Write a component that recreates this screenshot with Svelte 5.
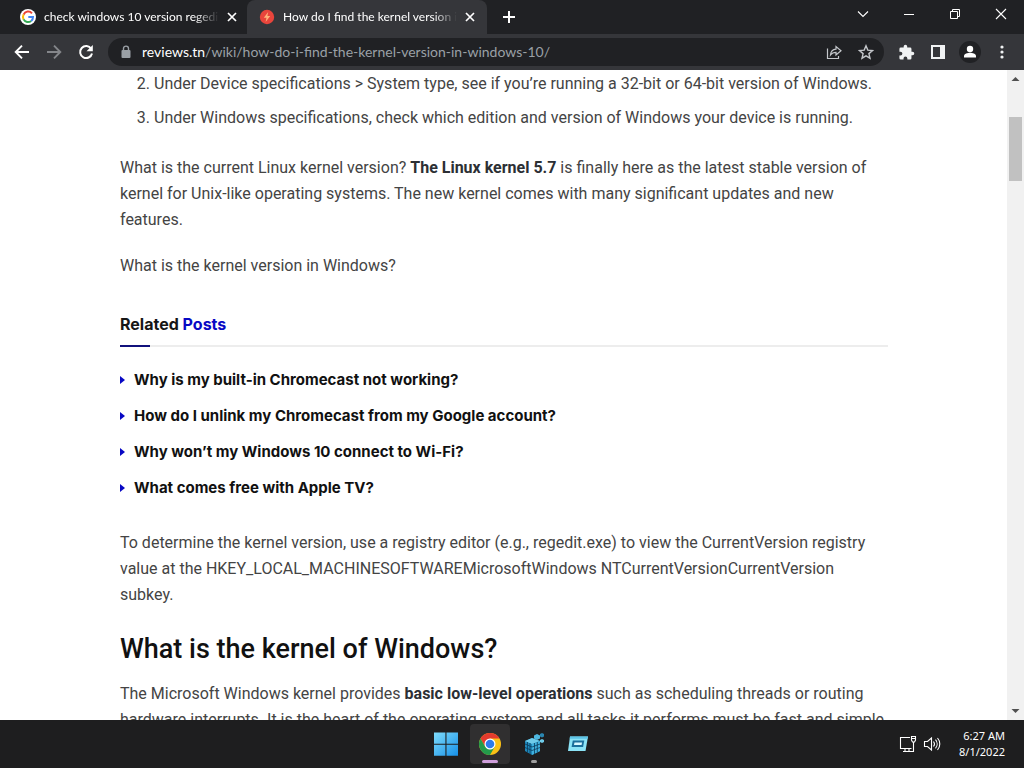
<script lang="ts">
    let address = "/wiki/how-do-i-find-the-kernel-version-in-windows-10/";

    const related = [
        "Why is my built-in Chromecast not working?",
        "How do I unlink my Chromecast from my Google account?",
        "Why won’t my Windows 10 connect to Wi-Fi?",
        "What comes free with Apple TV?",
    ];
</script>

<div class="desktop">
    <header class="tabstrip">
        <div class="tab">
            <svg class="favicon" viewBox="0 0 16 16">
                <circle cx="8" cy="8" r="8" fill="#fff" />
                <path d="M12 4.3A5 5 0 0 0 3.6 5.6" fill="none" stroke="#ea4335" stroke-width="2" />
                <path d="M3.6 5.6A5 5 0 0 0 3.6 10.4" fill="none" stroke="#fbbc05" stroke-width="2" />
                <path d="M3.6 10.4A5 5 0 0 0 11.2 11.9" fill="none" stroke="#34a853" stroke-width="2" />
                <path d="M11.2 11.9A5 5 0 0 0 13 8H8.3" fill="none" stroke="#4285f4" stroke-width="2" />
            </svg>
            <span class="tabTitle">check windows 10 version regedi</span>
            <button class="tabClose" aria-label="Close tab">
                <svg width="10" height="10" viewBox="0 0 10 10"><path d="M1 1l8 8M9 1l-8 8" stroke="#fff" stroke-width="1.7" /></svg>
            </button>
        </div>
        <div class="tab active">
            <svg class="favicon" viewBox="0 0 16 16">
                <circle cx="8" cy="8" r="7.2" fill="#e8453c" />
                <path d="M9.2 3L4.8 8.8h2.7L6.6 13l4.6-6H8.4z" fill="#ffb37a" />
            </svg>
            <span class="tabTitle">How do I find the kernel version i</span>
            <button class="tabClose" aria-label="Close tab">
                <svg width="10" height="10" viewBox="0 0 10 10"><path d="M1 1l8 8M9 1l-8 8" stroke="#fff" stroke-width="1.7" /></svg>
            </button>
        </div>
        <button class="newTab" aria-label="New tab">
            <svg width="12" height="12" viewBox="0 0 12 12"><path d="M6 0v12M0 6h12" stroke="#fff" stroke-width="2" /></svg>
        </button>
        <div class="windowButtons">
            <button aria-label="Search tabs">
                <svg width="12" height="12" viewBox="0 0 12 12"><path d="M1 3.5l5 5 5-5" fill="none" stroke="#fff" stroke-width="1.1" /></svg>
            </button>
            <button aria-label="Minimize">
                <svg width="12" height="12" viewBox="0 0 12 12"><path d="M1 6.5h10" stroke="#fff" /></svg>
            </button>
            <button aria-label="Restore">
                <svg width="12" height="12" viewBox="0 0 12 12"><path d="M1.5 3.5h7v7h-7zM3.5 3.5v-2h7v7h-2" fill="none" stroke="#fff" /></svg>
            </button>
            <button aria-label="Close window">
                <svg width="12" height="12" viewBox="0 0 12 12"><path d="M1 1l10 10M11 1L1 11" stroke="#fff" stroke-width="1.1" /></svg>
            </button>
        </div>
    </header>

    <nav class="toolbar">
        <button aria-label="Back">
            <svg width="16" height="16" viewBox="0 0 16 16"><path d="M15 8H2M8 1.7L1.7 8 8 14.3" fill="none" stroke="#fff" stroke-width="1.9" /></svg>
        </button>
        <button aria-label="Forward">
            <svg width="16" height="16" viewBox="0 0 16 16"><path d="M1 8h13M8 1.7L14.3 8 8 14.3" fill="none" stroke="#84868a" stroke-width="1.9" /></svg>
        </button>
        <button aria-label="Reload">
            <svg width="16" height="16" viewBox="0 0 16 16">
                <path d="M13.2 4.8A6 6 0 1 0 14 9.4" fill="none" stroke="#fff" stroke-width="2" />
                <path d="M14.8 1v6.3H8.5z" fill="#fff" />
            </svg>
        </button>
        <div class="omnibox">
            <svg width="10" height="14" viewBox="0 0 10 14">
                <rect x="0.5" y="5" width="9" height="8" rx="1" fill="#9aa0a6" />
                <path d="M2.5 5.5V3.6a2.5 2.5 0 0 1 5 0v1.9" fill="none" stroke="#9aa0a6" stroke-width="1.4" />
            </svg>
            <a class="address" href="#page"><span>reviews.tn</span>{address}</a>
            <button aria-label="Share this page">
                <svg width="16" height="16" viewBox="0 0 16 16" fill="none" stroke="#c4c7cb" stroke-width="1.2">
                    <path d="M1.5 4.5v10h11v-2.5" />
                    <path d="M4.5 11C4.8 7.5 6.8 5.3 10 5.2V2.5l5 4.2-5 4.3V8.3C7.6 8.3 5.8 9.2 4.5 11z" />
                </svg>
            </button>
            <button aria-label="Bookmark this tab">
                <svg width="16" height="16" viewBox="0 0 16 16"><path d="M8 1.8l1.8 4.3 4.7.4-3.6 3.1 1.1 4.6L8 11.8l-4 2.4 1.1-4.6-3.6-3.1 4.7-.4z" fill="none" stroke="#c4c7cb" stroke-width="1.4" /></svg>
            </button>
        </div>
        <div class="tools">
            <button aria-label="Extensions">
                <svg width="17" height="17" viewBox="0 0 24 24"><path fill="#f1f3f4" d="M20.5 11H19V7a2 2 0 0 0-2-2h-4V3.500a2.500 2.500 0 0 0-5 0V5H4a2 2 0 0 0-2 2v3.800h1.500a2.700 2.700 0 0 1 0 5.400H2V20a2 2 0 0 0 2 2h3.800v-1.500a2.700 2.700 0 0 1 5.400 0V22H17a2 2 0 0 0 2-2v-4h1.500a2.500 2.500 0 0 0 0-5z" /></svg>
            </button>
            <button aria-label="Side panel">
                <svg width="16" height="16" viewBox="0 0 16 16"><path fill="#f1f3f4" fill-rule="evenodd" d="M1 1h14v14H1zM3 3v10h7V3z" /></svg>
            </button>
            <button aria-label="Profile">
                <svg width="22" height="22" viewBox="0 0 22 22">
                    <circle cx="11" cy="11" r="11" fill="#202124" />
                    <circle cx="11" cy="8" r="3.2" fill="#fff" />
                    <path d="M5 16.500v-1.500c0-2.300 3.600-3.300 6-3.300s6 1 6 3.300v1.500z" fill="#fff" />
                </svg>
            </button>
            <button aria-label="Menu">
                <svg width="4" height="16" viewBox="0 0 4 16" fill="#f1f3f4"><circle cx="2" cy="3" r="1.6" /><circle cx="2" cy="8" r="1.6" /><circle cx="2" cy="13" r="1.6" /></svg>
            </button>
        </div>
    </nav>

    <main class="view" id="page">
        <article>
            <ol start="2">
                <li>Under Device specifications &gt; System type, see if you’re running a 32-bit or 64-bit version of Windows.</li>
                <li>Under Windows specifications, check which edition and version of Windows your device is running.</li>
            </ol>
            <p>
                What is the current Linux kernel version? <strong>The Linux kernel 5.7</strong> is finally here as the latest stable version of
                kernel for Unix-like operating systems. The new kernel comes with many significant updates and new features.
            </p>
            <p>What is the kernel version in Windows?</p>
            <section class="related">
                <h3>Related <span>Posts</span></h3>
                <ul>
                    {#each related as title}
                        <li><a href="#page">{title}</a></li>
                    {/each}
                </ul>
            </section>
            <p>
                To determine the kernel version, use a registry editor (e.g., regedit.exe) to view the CurrentVersion registry
                value at the HKEY_LOCAL_MACHINESOFTWAREMicrosoftWindows NTCurrentVersionCurrentVersion subkey.
            </p>
            <h2>What is the kernel of Windows?</h2>
            <p>
                The Microsoft Windows kernel provides <strong>basic low-level operations</strong> such as scheduling threads or routing
                hardware interrupts. It is the heart of the operating system and all tasks it performs must be fast and simple
            </p>
        </article>
        <div class="scrollbar">
            <svg width="17" height="17" viewBox="0 0 17 17"><path d="M4.500 11L8.500 7l4 4z" fill="#505050" /></svg>
            <div class="track"><div class="thumb"></div></div>
            <svg width="17" height="17" viewBox="0 0 17 17"><path d="M4.500 6L8.500 10l4-4z" fill="#505050" /></svg>
        </div>
    </main>

    <footer class="taskbar">
        <div class="apps">
            <button aria-label="Start">
                <svg width="24" height="24" viewBox="0 0 24 24">
                    <defs>
                        <linearGradient id="win" x1="0" y1="0" x2="1" y2="1">
                            <stop offset="0" stop-color="#7fdcfb" />
                            <stop offset="1" stop-color="#1690e8" />
                        </linearGradient>
                    </defs>
                    <path fill="url(#win)" d="M0 .5h11.400v11.200H0zM12.500 .5H24v11.200H12.500zM0 12.700h11.400v11H0zM12.500 12.700H24v11H12.500z" />
                </svg>
            </button>
            <button class="current" aria-label="Google Chrome">
                <svg width="24" height="24" viewBox="0 0 24 24">
                    <circle cx="12" cy="12" r="11" fill="#fbc116" />
                    <path d="M2.470 6.500A11 11 0 0 1 21.530 6.500H12L7.240 14.750z" fill="#e33b2e" />
                    <path d="M2.470 6.500A11 11 0 0 0 12 23L16.760 14.750L12 17.500L7.240 14.750z" fill="#239b4b" />
                    <circle cx="12" cy="12" r="5.500" fill="#fff" />
                    <circle cx="12" cy="12" r="4.300" fill="#2f7bea" />
                </svg>
            </button>
            <button class="running" aria-label="Registry Editor">
                <svg width="24" height="24" viewBox="0 0 24 24">
                    <path d="M3 9l7-3 8 3v10l-8 4-7-4z" fill="#1f86b8" />
                    <path d="M3 9l7-3 8 3-8 3z" fill="#6fcbe9" />
                    <path d="M10 12l8-3v10l-8 4z" fill="#3fb0dd" />
                    <path d="M5.500 10v10.500M8 11v11M3 12l7 3 8-3M3 15.500l7 3 8-3M12.500 11v11M15.300 10v10.500" stroke="#0b3c5c" stroke-width=".8" fill="none" />
                    <path d="M12 3.500l3-1.500 3 1.500v3L15 8l-3-1.500z" fill="#4eb7df" />
                    <path d="M18 2l2-1 2 1v2.500l-2 1-2-1z" fill="#2a86b0" />
                    <path d="M18 8l2-1 2 1v2l-2 1-2-1z" fill="#6fcbe9" />
                </svg>
            </button>
            <button aria-label="Run">
                <svg width="24" height="24" viewBox="0 0 24 24">
                    <path d="M4 4.500h18L19.500 19H2z" fill="#8be3f6" />
                    <path d="M4 4.500h18l-.4 2.300H3.700z" fill="#5cc3e6" />
                    <path d="M6.800 8.500h11.500l-1.200 6.500H5.600z" fill="#1b6f9c" />
                    <path d="M8.500 10.500h7.500l-.4 2.500H8z" fill="#d9f8ff" />
                </svg>
            </button>
        </div>
        <div class="tray">
            <svg width="18" height="18" viewBox="0 0 18 18" fill="none" stroke="#fff" stroke-width="1.100">
                <path d="M11 2.500H1.500v11h11M4 16.500h8M6 13.500v3M10 13.500v3M14.500 7v9.500H12" />
                <path d="M12.500 1.500h4v3.500l-1 2h-2l-1-2zM12.500 3.500h4" />
            </svg>
            <svg width="18" height="18" viewBox="0 0 18 18" fill="none" stroke="#fff" stroke-width="1.100">
                <path d="M1.500 6.500h3l4-3.500v12l-4-3.500h-3z" />
                <path d="M10.500 6.500a4 4 0 0 1 0 5M12.500 4.700a6.500 6.500 0 0 1 0 8.600M14.500 3a9 9 0 0 1 0 12" />
            </svg>
            <div class="clock">
                <time>6:27 AM</time>
                <time>8/1/2022</time>
            </div>
        </div>
    </footer>
</div>

<style>
    :global(body) {
        margin: 0;
        overflow: hidden;
    }

    .desktop {
        height: 100vh;
        display: flex;
        flex-direction: column;
        font-family: Lato, "Open Sans", sans-serif;
        background: #fff;
    }

    button {
        border: none;
        background: none;
        padding: 0;
        display: flex;
        align-items: center;
        justify-content: center;
        flex: none;
    }

    svg {
        display: block;
        flex: none;
    }

    .tabstrip {
        height: 34px;
        flex: none;
        display: flex;
        background: #202124;
        color: #fff;
    }

    .tab {
        width: 240px;
        box-sizing: border-box;
        display: flex;
        align-items: center;
        gap: 8px;
        padding: 0 12px;
        font-size: 12px;
    }

    .tab:first-child {
        width: 247px;
        padding-left: 20px;
        padding-right: 10px;
    }

    .tab.active {
        background: #35363a;
        border-radius: 8px 8px 0 0;
    }

    .favicon {
        width: 16px;
        height: 16px;
    }

    .tabTitle {
        flex: 1;
        min-width: 0;
        overflow: hidden;
        white-space: nowrap;
        line-height: 20px;
        mask-image: linear-gradient(to right, #000 calc(100% - 24px), transparent);
    }

    .tabClose {
        width: 10px;
        height: 16px;
    }

    .newTab {
        width: 44px;
    }

    .windowButtons {
        display: flex;
        height: 28px;
        margin-left: auto;
    }

    .windowButtons button {
        width: 46px;
    }

    .toolbar {
        height: 36px;
        flex: none;
        display: flex;
        align-items: center;
        background: #35363a;
        padding: 0 6px;
    }

    .toolbar > button {
        width: 32px;
        height: 32px;
    }

    .omnibox {
        flex: 1;
        min-width: 0;
        height: 28px;
        box-sizing: border-box;
        margin-left: 6px;
        padding: 0 10px 0 13px;
        display: flex;
        align-items: center;
        gap: 16px;
        border-radius: 14px;
        background: #202124;
    }

    .omnibox > svg {
        margin-right: -5px;
    }

    .address {
        flex: 1;
        min-width: 0;
        overflow: hidden;
        white-space: nowrap;
        font-size: 14px;
        line-height: 20px;
        color: #9aa0a6;
        text-decoration: none;
    }

    .address span {
        color: #fff;
    }

    .tools {
        display: flex;
        align-items: center;
        margin-left: 6px;
    }

    .tools button {
        width: 32px;
        height: 32px;
    }

    .view {
        flex: 1;
        min-height: 0;
        display: flex;
        overflow: hidden;
    }

    article {
        flex: 1;
        min-width: 0;
        padding: 1px 119px 0 120px;
        font-family: Roboto, sans-serif;
        font-size: 16px;
        line-height: 26px;
        color: #444;
    }

    ol {
        margin: 0 0 24px;
        padding-left: 34px;
    }

    ol li + li {
        margin-top: 8px;
    }

    p {
        margin: 0 0 20px;
    }

    strong {
        color: #2c2f34;
    }

    .related {
        margin: 32px 0 29px;
        font-family: Inter, "Open Sans", sans-serif;
        font-size: 15px;
        font-weight: 700;
    }

    h3 {
        position: relative;
        margin: 0 0 20px;
        padding-bottom: 8px;
        border-bottom: 2px solid #ededed;
        font-size: 16px;
        font-weight: 700;
        color: #161616;
    }

    h3 span {
        color: #0808c4;
    }

    h3::after {
        content: "";
        position: absolute;
        left: 0;
        bottom: -2px;
        width: 30px;
        height: 2px;
        background: #11117c;
    }

    ul {
        margin: 0;
        padding: 0;
        list-style: none;
        display: flex;
        flex-direction: column;
        gap: 10px;
    }

    ul li {
        display: flex;
        align-items: center;
        gap: 9px;
    }

    ul li::before {
        content: "";
        border: 4px solid transparent;
        border-left: 5px solid #0808c4;
        border-right: none;
    }

    ul a {
        color: #111;
        text-decoration: none;
    }

    h2 {
        margin: 24px 0 14px;
        font-size: 27px;
        font-weight: 500;
        line-height: 35px;
        color: #111;
    }

    .scrollbar {
        width: 17px;
        flex: none;
        display: flex;
        flex-direction: column;
        background: #f1f1f1;
    }

    .track {
        flex: 1;
        padding: 30px 2px 0;
    }

    .thumb {
        height: 64px;
        background: #c1c1c1;
    }

    .taskbar {
        height: 48px;
        flex: none;
        display: grid;
        grid-template-columns: 1fr auto 1fr;
        align-items: center;
        background: #1e1e1f;
        color: #fff;
    }

    .apps {
        grid-column: 2;
        display: flex;
        gap: 4px;
    }

    .apps button {
        position: relative;
        width: 40px;
        height: 40px;
        border-radius: 4px;
    }

    .apps .current {
        background: #302f30;
    }

    .running::after,
    .current::after {
        content: "";
        position: absolute;
        bottom: 1px;
        width: 6px;
        height: 3px;
        border-radius: 2px;
        background: #a0a0a0;
    }

    .current::after {
        width: 16px;
        background: #cf9fdc;
    }

    .tray {
        justify-self: end;
        display: flex;
        align-items: center;
        gap: 6px;
        padding-right: 19px;
    }

    .clock {
        display: flex;
        flex-direction: column;
        align-items: flex-end;
        margin-left: 12px;
        font-family: "Noto Sans", sans-serif;
        font-size: 11px;
        line-height: 16px;
    }
</style>
